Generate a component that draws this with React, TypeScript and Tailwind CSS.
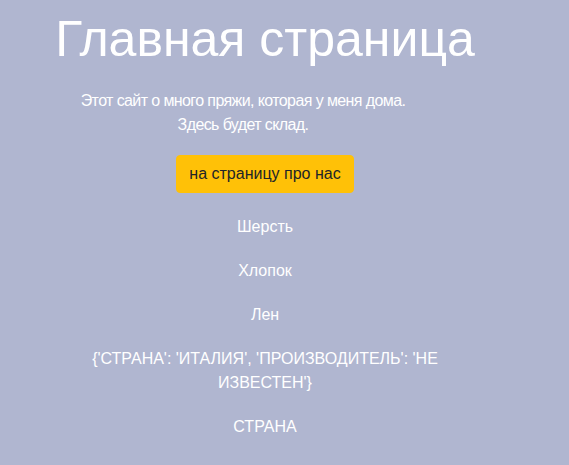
export default function App() {
  const items = [
    "Шерсть",
    "Хлопок",
    "Лен",
    "{'СТРАНА': 'ИТАЛИЯ', 'ПРОИЗВОДИТЕЛЬ': 'НЕ ИЗВЕСТЕН'}",
    "СТРАНА",
  ];

  return (
    <div className="min-h-screen bg-[#b0b6d0] font-['Liberation_Sans',Arial,sans-serif] text-white">
      <div className="w-[530px] text-center flex flex-col items-center">
        <h1 className="mt-[9px] text-[50px] leading-[1.2] font-normal">Главная страница</h1>
        <p className="mt-5 pr-[44px] w-full text-base leading-6 tracking-[-0.6px]">
          Этот сайт о много пряжи, которая у меня дома.
          <br />
          Здесь будет склад.
        </p>
        <a
          href="#"
          className="mt-[18px] inline-block rounded bg-[#ffc107] border border-[#ffc107] px-3 py-1.5 text-base leading-6 text-[#212529]"
        >
          на страницу про нас
        </a>
        <ul className="mt-[22px] w-[380px] flex flex-col gap-5">
          {items.map((item) => (
            <li key={item} className="text-base leading-6">
              {item}
            </li>
          ))}
        </ul>
      </div>
    </div>
  );
}
